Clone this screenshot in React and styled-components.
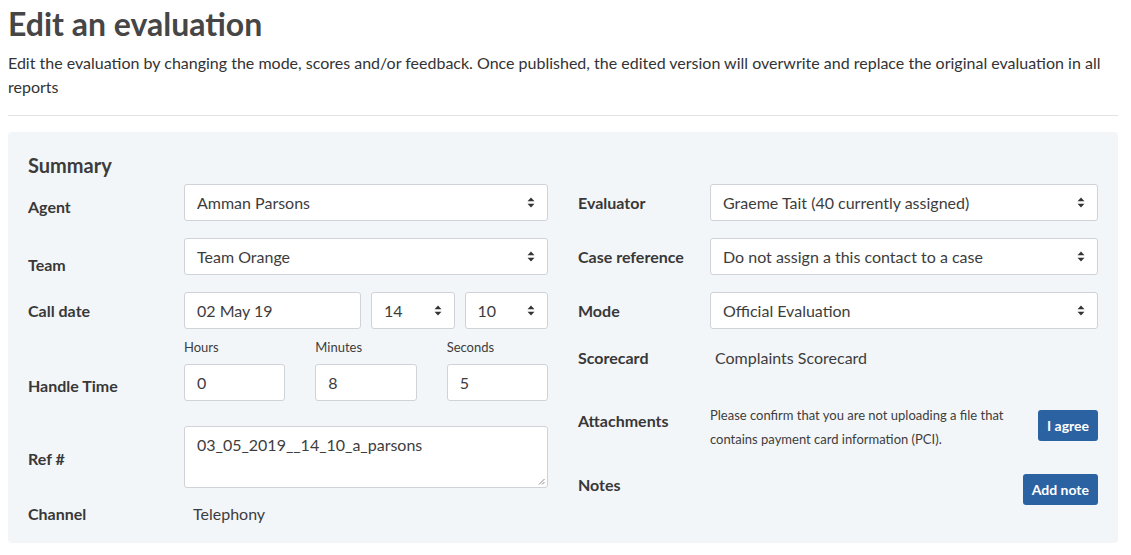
import React from "react";
import styled, { createGlobalStyle } from "styled-components";

const GlobalStyle = createGlobalStyle`
  body {
    margin: 0;
    background: #ffffff;
    font-family: Lato, "Open Sans", "Liberation Sans", sans-serif;
    color: #333333;
  }
  * {
    box-sizing: border-box;
  }
`;

const Page = styled.div`
  padding: 0 13px 0 8px;
`;

const Title = styled.h1`
  margin: 0;
  padding-top: 4px;
  font-size: 32px;
  line-height: 40px;
  font-weight: 700;
  color: #464646;
`;

const Intro = styled.p`
  margin: 7px 0 0;
  font-size: 16px;
  line-height: 24px;
  color: #333;
`;

const Divider = styled.hr`
  margin: 16px 0 16px;
  border: none;
  border-top: 1px solid #e3e3e3;
`;

const Panel = styled.section`
  background: #f3f6f9;
  border-radius: 4px;
  padding: 21px 20px 19px;
`;

const PanelTitle = styled.h3`
  margin: 0 0 7px;
  font-size: 20px;
  line-height: 24px;
  font-weight: 700;
  color: #3c3c3c;
`;

const Columns = styled.div`
  display: grid;
  grid-template-columns: 520px 520px;
  column-gap: 30px;
`;

const Column = styled.div`
  display: flex;
  flex-direction: column;
`;

const Row = styled.div`
  display: grid;
  grid-template-columns: ${(p) => p.$labelWidth}px 1fr;
  align-items: start;
  margin-top: ${(p) => p.$mt || 0}px;
`;

const Label = styled.div`
  font-size: 16px;
  line-height: 20px;
  font-weight: 700;
  color: #383838;
  margin-top: ${(p) => p.$offset || 0}px;
`;

const SelectBox = styled.div`
  display: flex;
  align-items: center;
  justify-content: space-between;
  height: 37px;
  padding: 0 12px;
  background: #fff;
  border: 1px solid #cfd3d7;
  border-radius: 3px;
  font-size: 16px;
  color: #3d3d3d;
`;

const TextBox = styled.div`
  display: flex;
  align-items: ${(p) => (p.$multi ? "flex-start" : "center")};
  height: ${(p) => p.$h || 37}px;
  padding: ${(p) => (p.$multi ? "8px 12px" : "0 12px")};
  background: #fff;
  border: 1px solid #cfd3d7;
  border-radius: 3px;
  font-size: 16px;
  line-height: 20px;
  color: #3d3d3d;
  position: relative;
`;

const Grip = styled.svg`
  position: absolute;
  right: 2px;
  bottom: 2px;
`;

const DateRow = styled.div`
  display: grid;
  grid-template-columns: 177px 1fr 1fr;
  column-gap: 10px;
`;

const TimeGrid = styled.div`
  display: grid;
  grid-template-columns: repeat(3, 1fr);
  column-gap: 30px;
  row-gap: 9px;
`;

const SmallCaption = styled.div`
  font-size: 13px;
  line-height: 16px;
  color: #3d3d3d;
`;

const PlainValue = styled.div`
  font-size: 16px;
  line-height: 20px;
  color: #3d3d3d;
  padding-left: ${(p) => p.$indent || 0}px;
  margin-top: ${(p) => p.$offset || 0}px;
`;

const ActionRow = styled.div`
  display: flex;
  align-items: flex-start;
  justify-content: space-between;
  gap: 20px;
`;

const Note = styled.div`
  font-size: 13px;
  line-height: 24px;
  color: #3d3d3d;
  max-width: 300px;
  margin-top: -7px;
`;

const Button = styled.button`
  margin-left: auto;
  height: 31px;
  padding: 0 9px;
  border: none;
  border-radius: 3px;
  background: #2b62a1;
  color: #fff;
  font-family: inherit;
  font-size: 14px;
  font-weight: 700;
`;

function Arrows() {
  return (
    <svg width="8" height="11" viewBox="0 0 8 11">
      <path d="M4 0.5 L7.5 4.2 H0.5 Z" fill="#333" />
      <path d="M4 10.5 L7.5 6.8 H0.5 Z" fill="#333" />
    </svg>
  );
}

function Select({ children }) {
  return (
    <SelectBox>
      <span>{children}</span>
      <Arrows />
    </SelectBox>
  );
}

export default function App() {
  return (
    <Page>
      <GlobalStyle />
      <Title>Edit an evaluation</Title>
      <Intro>
        Edit the evaluation by changing the mode, scores and/or feedback. Once
        published, the edited version will overwrite and replace the original
        evaluation in all reports
      </Intro>
      <Divider />
      <Panel>
        <PanelTitle>Summary</PanelTitle>
        <Columns>
          <Column>
            <Row $labelWidth={156}>
              <Label $offset={13}>Agent</Label>
              <Select>Amman Parsons</Select>
            </Row>
            <Row $labelWidth={156} $mt={17}>
              <Label $offset={17}>Team</Label>
              <Select>Team Orange</Select>
            </Row>
            <Row $labelWidth={156} $mt={17}>
              <Label $offset={9}>Call date</Label>
              <DateRow>
                <TextBox>02 May 19</TextBox>
                <Select>14</Select>
                <Select>10</Select>
              </DateRow>
            </Row>
            <Row $labelWidth={156} $mt={10}>
              <Label $offset={37}>Handle Time</Label>
              <TimeGrid>
                <SmallCaption>Hours</SmallCaption>
                <SmallCaption>Minutes</SmallCaption>
                <SmallCaption>Seconds</SmallCaption>
                <TextBox>0</TextBox>
                <TextBox>8</TextBox>
                <TextBox>5</TextBox>
              </TimeGrid>
            </Row>
            <Row $labelWidth={156} $mt={25}>
              <Label $offset={23}>Ref #</Label>
              <TextBox $multi $h={62}>
                03_05_2019__14_10_a_parsons
                <Grip width="7" height="7" viewBox="0 0 7 7">
                  <path d="M1 6.5 L6.5 1 M4 6.5 L6.5 4" stroke="#888" strokeWidth="1" />
                </Grip>
              </TextBox>
            </Row>
            <Row $labelWidth={156} $mt={16}>
              <Label>Channel</Label>
              <PlainValue $indent={9}>Telephony</PlainValue>
            </Row>
          </Column>
          <Column>
            <Row $labelWidth={132}>
              <Label $offset={9}>Evaluator</Label>
              <Select>Graeme Tait (40 currently assigned)</Select>
            </Row>
            <Row $labelWidth={132} $mt={17}>
              <Label $offset={9}>Case reference</Label>
              <Select>Do not assign a this contact to a case</Select>
            </Row>
            <Row $labelWidth={132} $mt={17}>
              <Label $offset={9}>Mode</Label>
              <Select>Official Evaluation</Select>
            </Row>
            <Row $labelWidth={132} $mt={19}>
              <Label>Scorecard</Label>
              <PlainValue $indent={5}>Complaints Scorecard</PlainValue>
            </Row>
            <Row $labelWidth={132} $mt={42}>
              <Label $offset={1}>Attachments</Label>
              <ActionRow>
                <Note>
                  Please confirm that you are not uploading a file that
                  contains payment card information (PCI).
                </Note>
                <Button>I agree</Button>
              </ActionRow>
            </Row>
            <Row $labelWidth={132} $mt={23}>
              <Label $offset={1}>Notes</Label>
              <ActionRow>
                <Button>Add note</Button>
              </ActionRow>
            </Row>
          </Column>
        </Columns>
      </Panel>
    </Page>
  );
}
